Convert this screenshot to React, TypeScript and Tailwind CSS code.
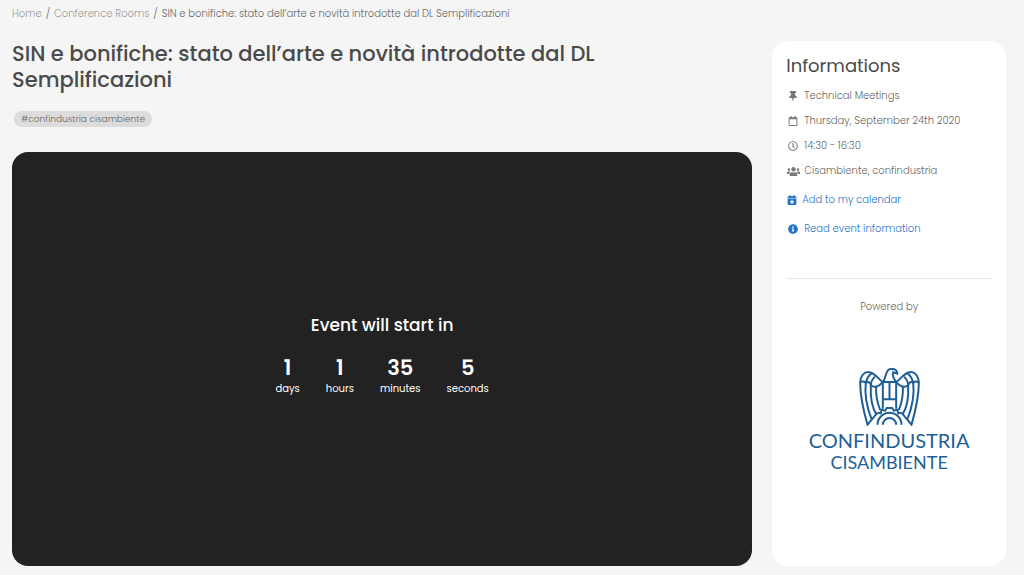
import type { ReactNode } from 'react'
import { FaCalendarPlus, FaInfoCircle, FaRegCalendar, FaRegClock, FaThumbtack, FaUsers } from 'react-icons/fa'

const countdown = [
  { value: 1, label: 'days' },
  { value: 1, label: 'hours' },
  { value: 35, label: 'minutes' },
  { value: 5, label: 'seconds' },
]

function InfoRow({ icon, children }: { icon: ReactNode; children: ReactNode }) {
  return (
    <li className="flex items-center gap-1">
      <span className="flex w-3.5 justify-center text-[#777]">{icon}</span>
      {children}
    </li>
  )
}

function Wing() {
  return (
    <>
      <path d="M98 66C84 58 74 36 54 36C42 36 30 48 30 68C30 112 40 152 52 194L82 158" />
      <path d="M30 68C36 62 44 66 47 68C50 56 56 46 64 40" />
      <path d="M47 68C52 64 60 66 62 76C72 84 86 80 98 66" />
      <path d="M47 67C42 108 52 146 64 177" />
      <path d="M62 76C60 112 66 142 78 162" />
      <path d="M78 80C76 108 82 130 90 150" />
      <path d="M62 76C62 66 66 58 74 50" />
    </>
  )
}

function EagleLogo() {
  return (
    <svg viewBox="27 24 182 174" className="h-[58px] w-[61px]" fill="none" stroke="#1f5f98" strokeWidth="6" aria-hidden="true">
      <Wing />
      <g transform="matrix(-1 0 0 1 236 0)">
        <Wing />
      </g>
      <path d="M98 66C109 56 104 28 121 27C133 26 142 31 141 41L129 37C125 46 132 58 138 66" />
      <path d="M98 66H138M118 66V118M98 118H138M98 66V146M138 66V146" />
      <path d="M82 158L92 160L94 149L105 152L110 144H126L131 152L142 149L144 160L154 158" />
      <path d="M82 194A36 36 0 0 1 154 194M98 194A20 20 0 0 1 138 194" />
    </svg>
  )
}

export default function App() {
  return (
    <div className="min-h-screen bg-[#f5f5f5] pr-[18px] pb-2 pl-3 font-['Poppins','Inter',sans-serif] text-[#666]">
      <nav aria-label="Breadcrumb" className="pt-1.5 text-[10px] leading-4 font-light">
        <ol className="flex gap-1">
          <li><a href="#home" className="text-[#999]">Home</a></li>
          <li>/</li>
          <li><a href="#rooms" className="text-[#999]">Conference Rooms</a></li>
          <li>/</li>
          <li>SIN e bonifiche: stato dell’arte e novità introdotte dal DL Semplificazioni</li>
        </ol>
      </nav>

      <div className="mt-[19px] grid grid-cols-[76fr_24fr] gap-5">
        <main>
          <h1 className="max-w-[640px] text-[21px] leading-[26px] font-medium text-[#4a4a4a]">
            SIN e bonifiche: stato dell’arte e novità introdotte dal DL Semplificazioni
          </h1>
          <div className="mt-[18px] flex px-0.5">
            <span className="rounded-full bg-[#dcdcdc] px-[7px] text-[9px] leading-4 font-light">#confindustria cisambiente</span>
          </div>

          <section className="mt-[25px] flex aspect-[740/414] flex-col items-center justify-center rounded-2xl bg-[#222] pb-2 text-white">
            <h2 className="text-[17px] leading-6 font-medium">Event will start in</h2>
            <div className="mt-[19px] flex gap-[26px]">
              {countdown.map((item) => (
                <div key={item.label} className="text-center">
                  <div className="text-[21px] leading-6 font-semibold">{item.value}</div>
                  <div className="text-[10px] leading-[18px]">{item.label}</div>
                </div>
              ))}
            </div>
          </section>
        </main>

        <aside className="rounded-2xl bg-white px-3.5 pt-[11px] text-[10px] leading-4 font-light">
          <h2 className="text-lg leading-7 font-normal text-[#4a4a4a]">Informations</h2>
          <ul className="mt-2 flex flex-col gap-[9px]">
            <InfoRow icon={<FaThumbtack />}>Technical Meetings</InfoRow>
            <InfoRow icon={<FaRegCalendar />}>Thursday, September 24th 2020</InfoRow>
            <InfoRow icon={<FaRegClock />}>14:30 - 16:30</InfoRow>
            <InfoRow icon={<FaUsers size={13} className="shrink-0" />}>Cisambiente, confindustria</InfoRow>
          </ul>
          <div className="mt-[13px] flex flex-col items-start gap-[13px] text-[#2674c8]">
            <a href="#calendar" className="flex items-center gap-1">
              <span className="flex w-3 justify-center"><FaCalendarPlus /></span>
              Add to my calendar
            </a>
            <a href="#information" className="flex items-center gap-1">
              <span className="flex w-3.5 justify-center"><FaInfoCircle /></span>
              Read event information
            </a>
          </div>
          <hr className="mt-[41px] border-[#e8e8e8]" />
          <p className="mt-5 text-center">Powered by</p>
          <div className="mt-[53px] flex flex-col items-center font-['Lato',sans-serif] leading-[22px] font-normal text-[#1f5f98]">
            <EagleLogo />
            <span className="mt-[3px] text-xl leading-[22px]">CONFINDUSTRIA</span>
            <span className="text-lg leading-[22px]">CISAMBIENTE</span>
          </div>
        </aside>
      </div>
    </div>
  )
}
